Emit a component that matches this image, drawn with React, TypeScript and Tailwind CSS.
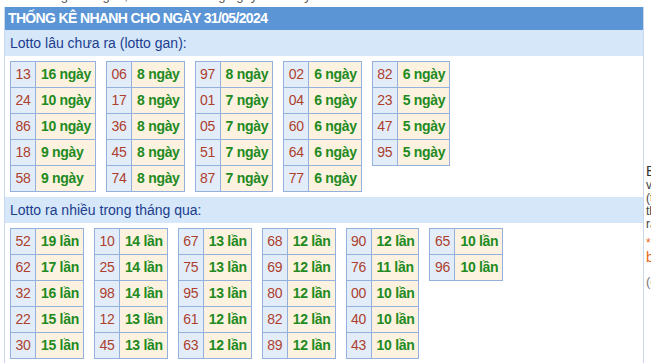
import React from 'react';

type Entry = [string, string];

const ganColumns: Entry[][] = [
  [['13', '16'], ['24', '10'], ['86', '10'], ['18', '9'], ['58', '9']],
  [['06', '8'], ['17', '8'], ['36', '8'], ['45', '8'], ['74', '8']],
  [['97', '8'], ['01', '7'], ['05', '7'], ['51', '7'], ['87', '7']],
  [['02', '6'], ['04', '6'], ['60', '6'], ['64', '6'], ['77', '6']],
  [['82', '6'], ['23', '5'], ['47', '5'], ['95', '5']],
];

const hotColumns: Entry[][] = [
  [['52', '19'], ['62', '17'], ['32', '16'], ['22', '15'], ['30', '15']],
  [['10', '14'], ['25', '14'], ['98', '14'], ['12', '13'], ['45', '13']],
  [['67', '13'], ['75', '13'], ['95', '13'], ['61', '12'], ['63', '12']],
  [['68', '12'], ['69', '12'], ['80', '12'], ['82', '12'], ['89', '12']],
  [['90', '12'], ['76', '11'], ['00', '10'], ['40', '10'], ['43', '10']],
  [['65', '10'], ['96', '10']],
];

function StatTable({ rows, unit }: { rows: Entry[]; unit: string }) {
  return (
    <table className="border-collapse text-[14px] tracking-[-0.3px]">
      <tbody>
        {rows.map(([num, count]) => (
          <tr key={num} className="h-[26px]">
            <td className="border border-[#94b0dc] bg-[#e3edfa] px-[4.5px] text-center text-[#ad3f2e]">{num}</td>
            <td className="border border-[#94b0dc] bg-[#fdf2e0] pl-[5px] pr-[4px] font-bold text-[#218a21]">
              {count} {unit}
            </td>
          </tr>
        ))}
      </tbody>
    </table>
  );
}

function Section({ title, columns, unit }: { title: string; columns: Entry[][]; unit: string }) {
  return (
    <>
      <div className="h-[26px] bg-[#d5e7f9] pl-[5px] text-[14px] leading-[26px] text-[#1c3d8e]">{title}</div>
      <div className="flex items-start gap-[10px] px-[5px] py-[5px]">
        {columns.map((rows, i) => (
          <StatTable key={i} rows={rows} unit={unit} />
        ))}
      </div>
    </>
  );
}

export default function App() {
  return (
    <div className="h-[363px] w-[651px] overflow-hidden bg-white font-['Liberation_Sans',Arial,sans-serif]">
      <div className="h-[7px] overflow-hidden">
        <p className="-mt-[12px] pl-[5px] text-[13px] leading-[16px] text-[#555]">
          Xem thống kê lô gan, lô ra nhiều trong ngày hôm nay
        </p>
      </div>
      <div className="flex">
        <div className="ml-[4px] w-[640px] shrink-0 border-x border-[#c9d8ec]">
          <div className="h-[23px] bg-[#5b95d6] pl-[3px] text-[14px] font-bold leading-[23px] tracking-[-0.65px] text-white">
            THỐNG KÊ NHANH CHO NGÀY 31/05/2024
          </div>
          <Section title="Lotto lâu chưa ra (lotto gan):" columns={ganColumns} unit="ngày" />
          <Section title="Lotto ra nhiều trong tháng qua:" columns={hotColumns} unit="lần" />
        </div>
        <div className="w-[240px] shrink-0 pl-[2px] pt-[156px]">
          <p className="text-[14px] leading-[16px] text-[#333]">Bảng thống kê</p>
          <p className="text-[12px] leading-[13px] text-[#444]">
            vừa được cập nhật
            <br />
            (theo kết quả mới nhất)
            <br />
            thống kê lô gan và lô
            <br />
            ra nhiều nhất
          </p>
          <p className="mt-[8px] text-[12px] leading-[8px] text-[#e8671c]">*</p>
          <p className="mt-[2px] text-[14px] leading-[17px] text-[#e8671c]">bạch thủ lô</p>
          <p className="mt-[8px] text-[13px] leading-[16px] text-[#777]">(cập nhật hàng ngày)</p>
        </div>
      </div>
    </div>
  );
}
